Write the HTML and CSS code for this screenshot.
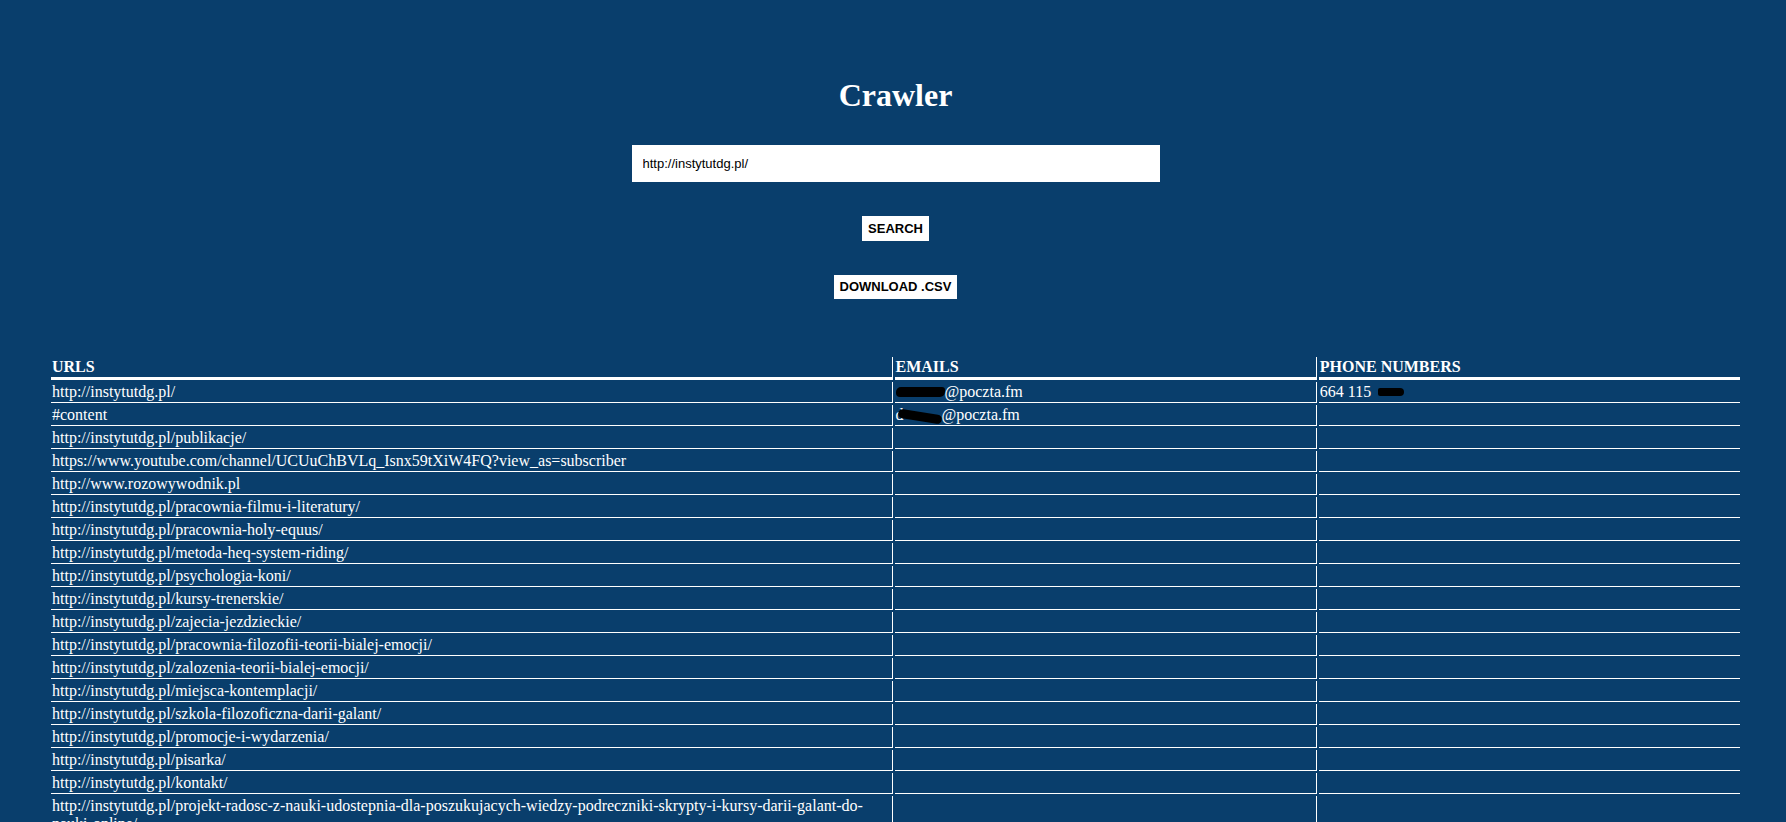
FILE: index.html
```html
<!DOCTYPE html>
<html lang="pl">
<head>
<meta charset="utf-8">
<title>Crawler</title>
<link rel="stylesheet" href="styles.css">
</head>
<body>
<div class="page">
  <header class="search">
    <h1 class="title">Crawler</h1>
    <input class="url-input" type="text" value="http://instytutdg.pl/">
    <button class="btn btn-search" type="button">SEARCH</button>
    <button class="btn btn-download" type="button">DOWNLOAD .CSV</button>
  </header>

  <table class="results">
    <thead>
      <tr>
        <th class="col-url">URLS</th>
        <th class="col-mail">EMAILS</th>
        <th class="col-phone">PHONE NUMBERS</th>
      </tr>
    </thead>
    <tbody>
      <tr><td>http://instytutdg.pl/</td><td><span class="redact redact-mail1"></span>@poczta.fm</td><td>664 115 <span class="redact redact-phone"></span></td></tr>
      <tr><td>#content</td><td>d<span class="redact redact-mail2"></span>@poczta.fm</td><td></td></tr>
      <tr><td>http://instytutdg.pl/publikacje/</td><td></td><td></td></tr>
      <tr><td>https://www.youtube.com/channel/UCUuChBVLq_Isnx59tXiW4FQ?view_as=subscriber</td><td></td><td></td></tr>
      <tr><td>http://www.rozowywodnik.pl</td><td></td><td></td></tr>
      <tr><td>http://instytutdg.pl/pracownia-filmu-i-literatury/</td><td></td><td></td></tr>
      <tr><td>http://instytutdg.pl/pracownia-holy-equus/</td><td></td><td></td></tr>
      <tr><td>http://instytutdg.pl/metoda-heq-system-riding/</td><td></td><td></td></tr>
      <tr><td>http://instytutdg.pl/psychologia-koni/</td><td></td><td></td></tr>
      <tr><td>http://instytutdg.pl/kursy-trenerskie/</td><td></td><td></td></tr>
      <tr><td>http://instytutdg.pl/zajecia-jezdzieckie/</td><td></td><td></td></tr>
      <tr><td>http://instytutdg.pl/pracownia-filozofii-teorii-bialej-emocji/</td><td></td><td></td></tr>
      <tr><td>http://instytutdg.pl/zalozenia-teorii-bialej-emocji/</td><td></td><td></td></tr>
      <tr><td>http://instytutdg.pl/miejsca-kontemplacji/</td><td></td><td></td></tr>
      <tr><td>http://instytutdg.pl/szkola-filozoficzna-darii-galant/</td><td></td><td></td></tr>
      <tr><td>http://instytutdg.pl/promocje-i-wydarzenia/</td><td></td><td></td></tr>
      <tr><td>http://instytutdg.pl/pisarka/</td><td></td><td></td></tr>
      <tr><td>http://instytutdg.pl/kontakt/</td><td></td><td></td></tr>
      <tr><td>http://instytutdg.pl/projekt-radosc-z-nauki-udostepnia-dla-poszukujacych-wiedzy-podreczniki-skrypty-i-kursy-darii-galant-do-nauki-online/</td><td></td><td></td></tr>
    </tbody>
  </table>
</div>
</body>
</html>
```

FILE: styles.css
```css
html,
body {
  margin: 0;
  background: #093e6c;
}

body {
  font-family: "Liberation Serif", "Times New Roman", serif;
  color: #fff;
}

.page {
  padding: 0 44px 40px 49px;
}

.search {
  display: flex;
  flex-direction: column;
  align-items: center;
  padding-top: 77px;
}

.title {
  margin: 0;
  font-size: 32px;
  line-height: 37px;
  font-weight: bold;
}

.url-input {
  margin-top: 31px;
  width: 528px;
  height: 37px;
  box-sizing: border-box;
  border: 0;
  padding: 0 11px;
  background: #fff;
  color: #000;
  font: 13px "Liberation Sans", Arial, sans-serif;
  outline: none;
}

.btn {
  height: 25px;
  margin-top: 34px;
  padding: 0 6px;
  border: 0;
  background: #fff;
  color: #000;
  font: bold 13px "Liberation Sans", Arial, sans-serif;
  line-height: 25px;
  cursor: pointer;
}

.btn-download {
  height: 24px;
  line-height: 24px;
}

.results {
  width: 100%;
  margin-top: 56px;
  border-collapse: separate;
  border-spacing: 2px;
  table-layout: fixed;
  font-size: 16px;
}

.results th,
.results td {
  padding: 1px;
  text-align: left;
  vertical-align: top;
}

.results th {
  font-weight: bold;
  border-bottom: 3px solid #fff;
}

.results td {
  border-bottom: 1px solid #fff;
}

.results th:not(:last-child),
.results td:not(:last-child) {
  border-right: 1px solid #fff;
}

.col-url {
  width: 50%;
}

.col-mail,
.col-phone {
  width: 25%;
}

.redact {
  display: inline-block;
  background: #000;
  vertical-align: baseline;
}

.redact-mail1 {
  width: 49px;
  height: 10px;
  border-radius: 5px 3px 5px 4px;
}

.redact-mail2 {
  width: 44px;
  height: 9px;
  margin-left: -6px;
  margin-bottom: -1px;
  border-radius: 5px;
  transform: rotate(9deg);
}

.redact-phone {
  width: 26px;
  height: 8px;
  margin-left: 3px;
  margin-bottom: 1px;
  border-radius: 2px 4px 4px 2px;
}
```
